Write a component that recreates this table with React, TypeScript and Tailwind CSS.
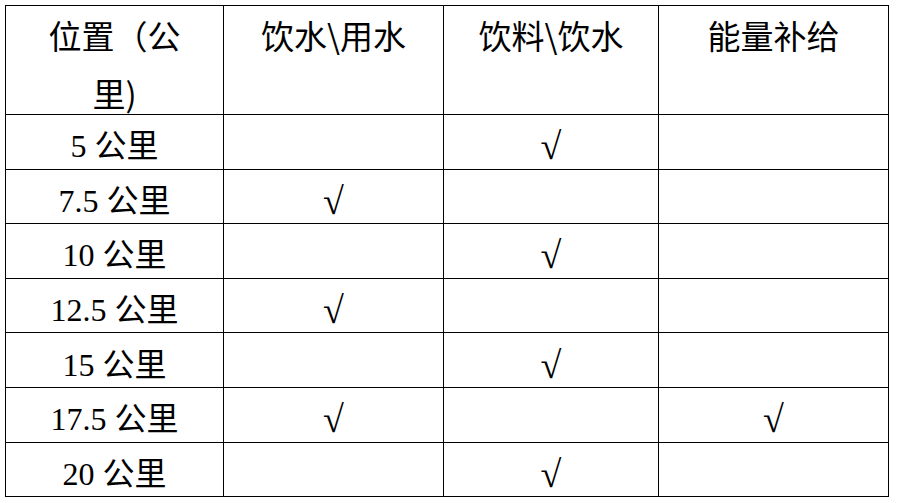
const rows: { pos: string; water: boolean; drink: boolean; energy: boolean }[] = [
  { pos: "5", water: false, drink: true, energy: false },
  { pos: "7.5", water: true, drink: false, energy: false },
  { pos: "10", water: false, drink: true, energy: false },
  { pos: "12.5", water: true, drink: false, energy: false },
  { pos: "15", water: false, drink: true, energy: false },
  { pos: "17.5", water: true, drink: false, energy: true },
  { pos: "20", water: false, drink: true, energy: false },
]

const headFont = "font-['Noto_Sans_CJK_SC',sans-serif]"
const bodyFont = "font-['Liberation_Serif','Noto_Sans_CJK_SC',serif]"

function Check({ on }: { on: boolean }) {
  return on ? <span className="text-[38px]">√</span> : null
}

function Head({ children }: { children: React.ReactNode }) {
  return (
    <th className="border border-black p-0 align-top font-normal">
      <div className="h-[108px]">
        <div className="mt-0 leading-[58px]">{children}</div>
      </div>
    </th>
  )
}

export default function App() {
  return (
    <div className="bg-white w-[898px] h-[503px] pl-[5px] pt-[5px]">
      <table className="table-fixed border-collapse text-black">
        <colgroup>
          <col className="w-[218px]" />
          <col className="w-[220px]" />
          <col className="w-[215px]" />
          <col className="w-[230px]" />
        </colgroup>
        <thead>
          <tr className={`${headFont} text-[33px]`}>
            <Head>
              位置（公
              <br />
              里)
            </Head>
            <Head>饮水\用水</Head>
            <Head>饮料\饮水</Head>
            <Head>能量补给</Head>
          </tr>
        </thead>
        <tbody>
          {rows.map((r) => (
            <tr key={r.pos} className={`h-[54.6px] ${bodyFont} text-[32px] text-center`}>
              <td className="border border-black p-0 pt-[9px] leading-none">{r.pos} 公里</td>
              <td className="border border-black p-0 pt-[9px] leading-none">
                <Check on={r.water} />
              </td>
              <td className="border border-black p-0 pt-[9px] leading-none">
                <Check on={r.drink} />
              </td>
              <td className="border border-black p-0 pt-[9px] leading-none">
                <Check on={r.energy} />
              </td>
            </tr>
          ))}
        </tbody>
      </table>
    </div>
  )
}
